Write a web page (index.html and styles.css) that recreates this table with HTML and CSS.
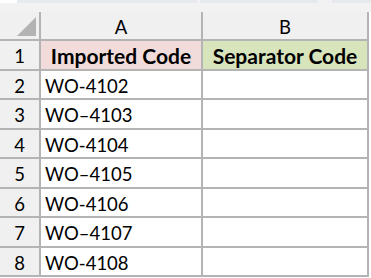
FILE: index.html
```html
<!DOCTYPE html>
<html lang="en">
<head>
<meta charset="utf-8">
<title>Sheet</title>
<link rel="stylesheet" href="styles.css">
</head>
<body>
<div class="topband">
  <div class="strip s1"></div>
  <div class="strip s2"></div>
  <div class="strip s3"></div>
</div>
<div class="sheet">
  <div class="cell corner">
    <svg width="19" height="19" viewBox="0 0 19 19"><polygon points="19,0 19,19 0,19" fill="#b3b3b3"/></svg>
  </div>
  <div class="cell colhead">A</div>
  <div class="cell colhead">B</div>

  <div class="cell rowhead">1</div>
  <div class="cell title a1">Imported Code</div>
  <div class="cell title b1">Separator Code</div>

  <div class="cell rowhead">2</div>
  <div class="cell">WO-4102</div>
  <div class="cell"></div>

  <div class="cell rowhead">3</div>
  <div class="cell">WO–4103</div>
  <div class="cell"></div>

  <div class="cell rowhead">4</div>
  <div class="cell">WO-4104</div>
  <div class="cell"></div>

  <div class="cell rowhead">5</div>
  <div class="cell">WO–4105</div>
  <div class="cell"></div>

  <div class="cell rowhead">6</div>
  <div class="cell">WO-4106</div>
  <div class="cell"></div>

  <div class="cell rowhead">7</div>
  <div class="cell">WO–4107</div>
  <div class="cell"></div>

  <div class="cell rowhead">8</div>
  <div class="cell">WO-4108</div>
  <div class="cell"></div>
</div>
</body>
</html>
```

FILE: styles.css
```css
html, body {
  margin: 0;
  padding: 0;
  background: #ffffff;
  overflow: hidden;
}

.topband {
  height: 12px;
  background: #f2f2f2;
  display: flex;
  align-items: flex-start;
  background-image: linear-gradient(#ffffff, #ffffff);
  background-size: 17px 3px;
  background-repeat: no-repeat;
}

.strip {
  height: 3px;
  background: #e6eaee;
}

.s1 { margin-left: 17px; width: 180px; }
.s2 { margin-left: 3px; width: 118px; }
.s3 { margin-left: 14px; flex: 1; }

.sheet {
  display: grid;
  grid-template-columns: 39px 160px 164px;
  grid-template-rows: 27px repeat(8, 27.5px);
  gap: 2px;
  width: max-content;
  background: #b4b4b4;
  border-right: 2px solid #b4b4b4;
  border-bottom: 2px solid #b4b4b4;
  font-family: Lato, "Liberation Sans", sans-serif;
  font-size: 18.5px;
  color: #000000;
}

.cell {
  background: #ffffff;
  display: flex;
  align-items: center;
  padding: 3px 4px 0;
  box-sizing: border-box;
  white-space: nowrap;
}

.corner {
  background: #f0f0f0;
  justify-content: flex-end;
  align-items: flex-end;
  padding: 0 3px 3px 0;
}

.corner svg {
  display: block;
}

.colhead,
.rowhead {
  background: #f0f0f0;
  justify-content: center;
  padding-left: 0;
  padding-right: 0;
}

.title {
  justify-content: center;
  font-weight: 700;
  font-size: 21px;
  padding-top: 2px;
}

.a1 { background: #f2dcdb; }
.b1 { background: #d8e4bc; }
```
